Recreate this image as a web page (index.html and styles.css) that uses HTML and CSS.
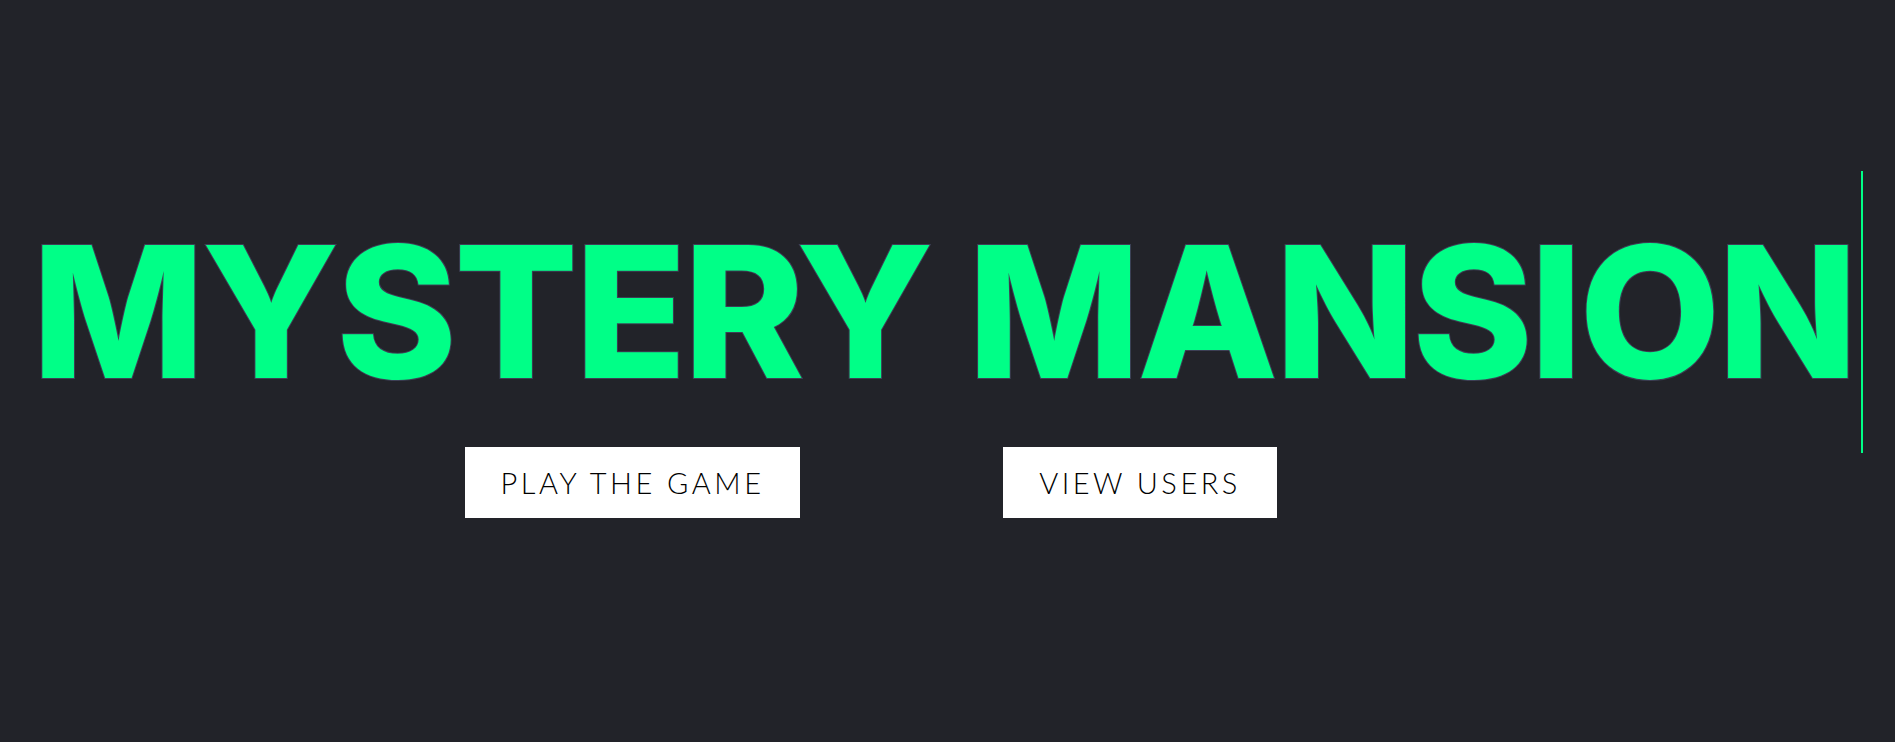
FILE: index.html
```html
<!DOCTYPE html>
<html lang="en">
<head>
<meta charset="utf-8">
<title>Mystery Mansion</title>
<link rel="stylesheet" href="styles.css">
</head>
<body>
<main class="hero">
  <h1 class="title"><span class="typed">MYSTERY MANSION</span></h1>
  <div class="actions">
    <a class="btn btn-play" href="#">PLAY THE GAME</a>
    <a class="btn btn-users" href="#">VIEW USERS</a>
  </div>
</main>
</body>
</html>
```
FILE: styles.css
```css
html, body {
  margin: 0;
  padding: 0;
}
body {
  background: #222329;
  height: 742px;
  overflow: hidden;
}
.hero {
  padding-top: 171px;
}
.title {
  margin: 0;
  display: flex;
  justify-content: center;
  font-family: "Inter", "Liberation Sans", sans-serif;
  font-weight: 800;
  font-size: 183px;
  line-height: 282px;
  color: #00ff87;
  -webkit-text-stroke: 2px #3d3f55;
  paint-order: stroke fill;
  letter-spacing: -3px;
}
.typed {
  display: inline-block;
  height: 282px;
  border-right: 2px solid #00ff87;
  padding-right: 6px;
}
.actions {
  display: flex;
  gap: 203px;
  padding-left: 465px;
  margin-top: -6px;
}
.btn {
  display: flex;
  align-items: center;
  justify-content: center;
  height: 71px;
  box-sizing: border-box;
  background: #ffffff;
  color: #000000;
  text-decoration: none;
  font-family: "Lato", "Liberation Sans", sans-serif;
  font-weight: 300;
  font-size: 29px;
  letter-spacing: 3.5px;
}
.btn-play {
  width: 335px;
}
.btn-users {
  width: 274px;
}
```
